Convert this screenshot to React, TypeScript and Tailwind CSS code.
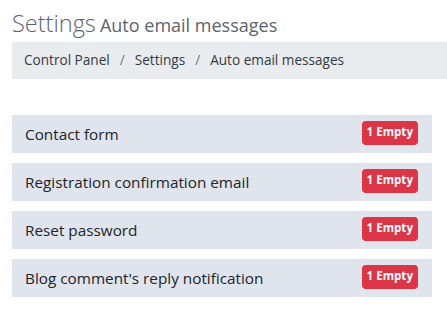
const items = [
  "Contact form",
  "Registration confirmation email",
  "Reset password",
  "Blog comment's reply notification",
];

const App = () => {
  return (
    <div className="min-h-screen bg-white font-['Open_Sans',sans-serif] text-[#212529]">
      <div className="pl-3">
        <h1 className="pt-[8px] leading-[30px] text-[#5c6370]">
          <span className="text-[23.5px] font-light">Settings</span>{" "}
          <span className="text-[18px]">Auto email messages</span>
        </h1>
        <nav className="mt-[1px] flex h-[37px] items-center bg-[#e9ecef] px-3 text-[13.6px] text-[#343a40]">
          <span>Control Panel</span>
          <span className="px-[10px] text-[#6c757d]">/</span>
          <span>Settings</span>
          <span className="px-[10px] text-[#6c757d]">/</span>
          <span>Auto email messages</span>
        </nav>
        <div className="mt-[36px] flex w-[420px] flex-col gap-[10px]">
          {items.map((item) => (
            <div
              key={item}
              className="flex h-[38px] items-center justify-between bg-[#e0e4ec] pl-[13px] pr-[14px]"
            >
              <span className="text-[15.3px]">{item}</span>
              <span className="mb-[2px] flex h-[24px] items-center rounded bg-[#dc3545] px-[5px] pb-[2px] text-[11.6px] font-bold text-white">
                1 Empty
              </span>
            </div>
          ))}
        </div>
      </div>
    </div>
  );
};

export default App;
